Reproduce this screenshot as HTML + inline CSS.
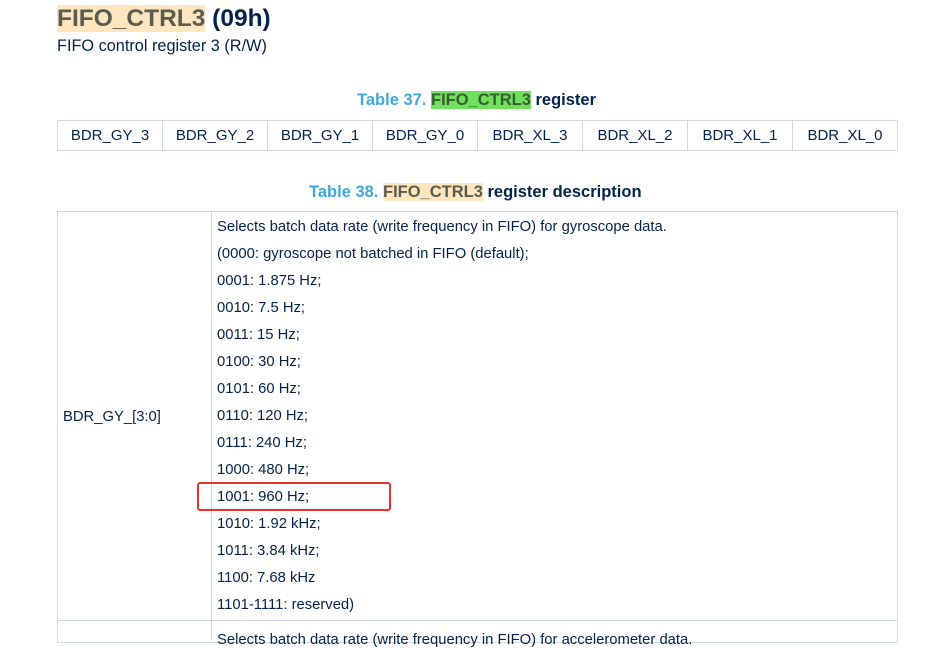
<!DOCTYPE html>
<html><head><meta charset="utf-8"><style>
body{margin:0;width:927px;height:631px;overflow:hidden;background:#fff;font-family:"Liberation Sans",sans-serif;color:#03234b;position:relative}
.a{position:absolute;white-space:nowrap}
.h{font-size:24.5px;font-weight:bold;top:5px;left:57px}
.hl{background:#fde6bd;color:#5b5b50}
.g{background:#6fe15a;color:#3a5a35}
.cap{font-size:16.5px;font-weight:bold}
.blue{color:#3ea8dc}
table{border-collapse:collapse;position:absolute}
td{border:1px solid #d3d8de;padding:0}
.reg td{width:104px;height:29px;text-align:center;font-size:15px}
.t{font-size:14.8px;left:217px}
</style></head><body>
<div class="a h"><span class="hl">FIFO_CTRL3</span> (09h)</div>
<div class="a" style="top:37px;left:57px;font-size:16.3px">FIFO control register 3 (R/W)</div>
<div class="a cap" style="top:91px;left:357px"><span class="blue">Table 37. </span><span class="g">FIFO_CTRL3</span> register</div>
<table class="reg" style="left:57px;top:120px;width:841px"><tr><td>BDR_GY_3</td><td>BDR_GY_2</td><td>BDR_GY_1</td><td>BDR_GY_0</td><td>BDR_XL_3</td><td>BDR_XL_2</td><td>BDR_XL_1</td><td>BDR_XL_0</td></tr></table>
<div class="a cap" style="top:183px;left:309px"><span class="blue">Table 38. </span><span class="hl">FIFO_CTRL3</span> register description</div>
<div class="a" style="left:57px;top:211px;width:839px;height:430px;border:1px solid #d3d8de"></div>
<div class="a" style="left:211px;top:211px;width:1px;height:430px;background:#d3d8de"></div>
<div class="a" style="left:57px;top:620px;width:841px;height:1px;background:#d3d8de"></div>
<div class="a" style="left:63px;top:409px;font-size:14.8px">BDR_GY_[3:0]</div>
<div class="a t" style="top:219px">Selects batch data rate (write frequency in FIFO) for gyroscope data.</div>
<div class="a t" style="top:246px">(0000: gyroscope not batched in FIFO (default);</div>
<div class="a t" style="top:273px">0001: 1.875 Hz;</div>
<div class="a t" style="top:300px">0010: 7.5 Hz;</div>
<div class="a t" style="top:327px">0011: 15 Hz;</div>
<div class="a t" style="top:354px">0100: 30 Hz;</div>
<div class="a t" style="top:381px">0101: 60 Hz;</div>
<div class="a t" style="top:408px">0110: 120 Hz;</div>
<div class="a t" style="top:435px">0111: 240 Hz;</div>
<div class="a t" style="top:462px">1000: 480 Hz;</div>
<div class="a t" style="top:489px">1001: 960 Hz;</div>
<div class="a t" style="top:516px">1010: 1.92 kHz;</div>
<div class="a t" style="top:543px">1011: 3.84 kHz;</div>
<div class="a t" style="top:570px">1100: 7.68 kHz</div>
<div class="a t" style="top:597px">1101-1111: reserved)</div>
<div class="a t" style="top:632px">Selects batch data rate (write frequency in FIFO) for accelerometer data.</div>
<div class="a" style="left:197px;top:482px;width:190px;height:25px;border:2px solid #e8322c;border-radius:3px"></div>
</body></html>
